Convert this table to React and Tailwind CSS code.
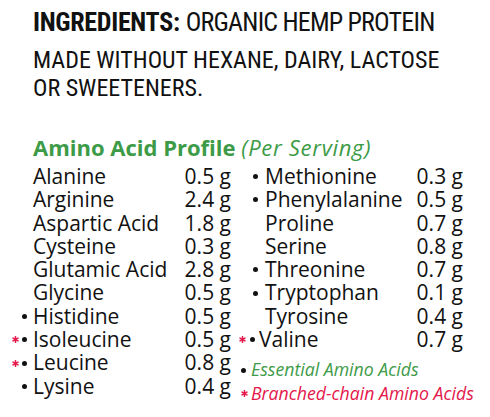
const left = [
  { n: "Alanine", v: "0.5 g" },
  { n: "Arginine", v: "2.4 g" },
  { n: "Aspartic Acid", v: "1.8 g" },
  { n: "Cysteine", v: "0.3 g" },
  { n: "Glutamic Acid", v: "2.8 g" },
  { n: "Glycine", v: "0.5 g" },
  { n: "Histidine", v: "0.5 g", e: true },
  { n: "Isoleucine", v: "0.5 g", e: true, b: true },
  { n: "Leucine", v: "0.8 g", e: true, b: true },
  { n: "Lysine", v: "0.4 g", e: true },
];
const right = [
  { n: "Methionine", v: "0.3 g", e: true },
  { n: "Phenylalanine", v: "0.5 g", e: true },
  { n: "Proline", v: "0.7 g" },
  { n: "Serine", v: "0.8 g" },
  { n: "Threonine", v: "0.7 g", e: true },
  { n: "Tryptophan", v: "0.1 g", e: true },
  { n: "Tyrosine", v: "0.4 g" },
  { n: "Valine", v: "0.7 g", e: true, b: true, tight: true },
];

function Star() {
  return (
    <svg width="7" height="7" viewBox="0 0 10 10" className="shrink-0">
      <g stroke="#e4174b" strokeWidth="2.2" strokeLinecap="round">
        <line x1="5" y1="1" x2="5" y2="9" />
        <line x1="1.5" y1="3" x2="8.5" y2="7" />
        <line x1="1.5" y1="7" x2="8.5" y2="3" />
      </g>
    </svg>
  );
}

function Dot() {
  return <span className="block w-[5px] h-[5px] rounded-full bg-[#111] shrink-0" />;
}

function Row({ r, side }) {
  let box = "w-[33px] pr-[6px] gap-[3px]";
  if (side === "r") box = "w-[33px] pr-[7px] gap-[3px]";
  if (r.tight) box = "w-[27px] pr-[4px] gap-[4px]";
  return (
    <div className="flex items-center h-[23.3px]">
      <div className={`flex items-center justify-end shrink-0 ${box}`}>
        {r.b && <Star />}
        {r.e && <Dot />}
      </div>
      <span className="flex-1 whitespace-nowrap">{r.n}</span>
      <span className="whitespace-nowrap">{r.v}</span>
    </div>
  );
}

export default function App() {
  return (
    <div className="w-[490px] h-[417px] bg-white text-[#111] overflow-hidden">
      <div className="pl-[33px] pt-[9px] font-['Roboto'] [font-stretch:75%] whitespace-nowrap">
        <div className="text-[26px] leading-[27px]">
          <span className="font-bold tracking-[-0.3px]">INGREDIENTS:</span>{" "}
          <span className="tracking-[-0.8px]">ORGANIC HEMP PROTEIN</span>
        </div>
        <div className="mt-[10px] text-[24px] leading-[28px]">
          MADE WITHOUT HEXANE, DAIRY, LACTOSE
          <br />
          OR SWEETENERS.
        </div>
      </div>
      <div className="font-['Open_Sans'] text-[#111]">
        <div className="pl-[33px] mt-[32px] text-[22px] leading-[26px] text-[#3d9b47] whitespace-nowrap">
          <span className="font-bold [font-stretch:92%]">Amino Acid Profile</span>{" "}
          <span className="italic tracking-[0.7px]">(Per Serving)</span>
        </div>
        <div className="flex mt-[5px] text-[21px] leading-[23.3px] [font-stretch:88%]">
          <div className="w-[232px] pr-[1px]">
            {left.map((r) => (
              <Row key={r.n} r={r} side="l" />
            ))}
          </div>
          <div className="w-[231px]">
            {right.map((r) => (
              <Row key={r.n} r={r} side="r" />
            ))}
            <div className="mt-[7px] text-[17.7px] italic leading-[23.3px] [font-stretch:100%]">
              <div className="flex items-center gap-[5px] pl-[9px]">
                <Dot />
                <span className="text-[#3d9b47] whitespace-nowrap">Essential Amino Acids</span>
              </div>
              <div className="flex items-center gap-[3px] pl-[9px]">
                <Star />
                <span className="text-[#e4174b] whitespace-nowrap">Branched-chain Amino Acids</span>
              </div>
            </div>
          </div>
        </div>
      </div>
    </div>
  );
}
